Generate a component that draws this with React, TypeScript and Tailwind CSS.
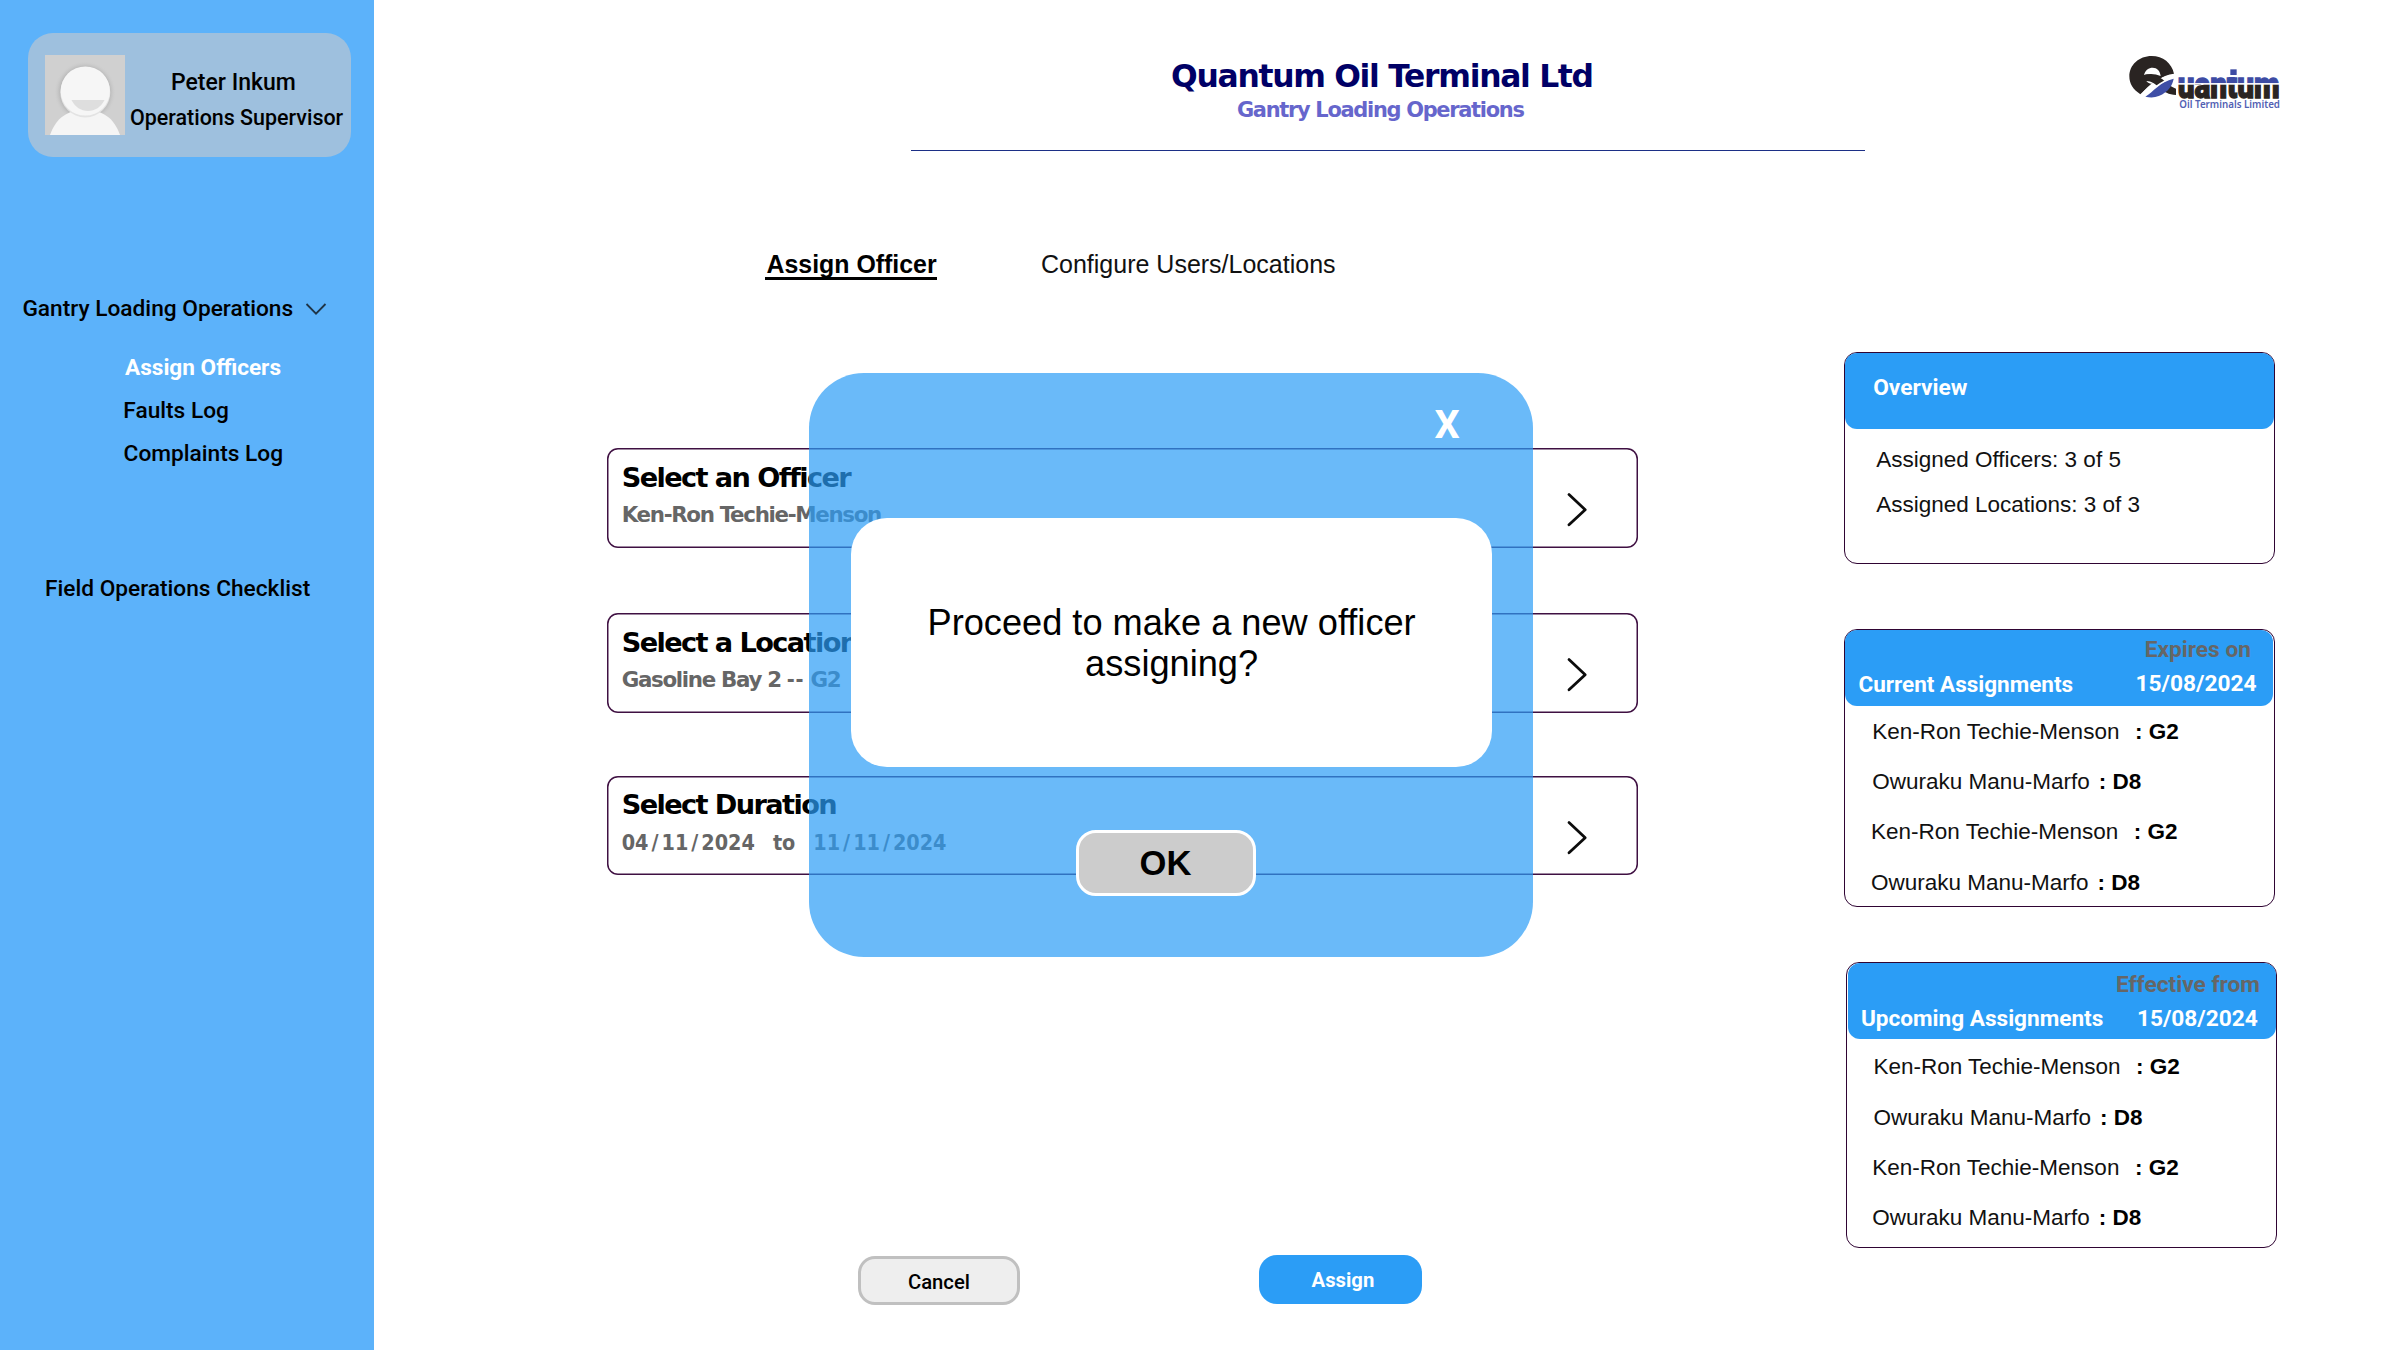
import React from 'react';

const roboto = 'font-[Roboto,sans-serif]';
const arial = "font-['Liberation_Sans',Arial,sans-serif]";
const wide = "font-['DejaVu_Sans',Verdana,sans-serif] [font-variant-ligatures:none]";
const condensed = "font-['DejaVu_Sans_Condensed','DejaVu_Sans',sans-serif]";

function Avatar() {
  return (
    <svg width="80" height="80" viewBox="0 0 80 80" className="shrink-0">
      <defs>
        <radialGradient id="shade" cx="50%" cy="50%" r="50%">
          <stop offset="78%" stopColor="#b4b4b4" />
          <stop offset="100%" stopColor="#cfcfcf" stopOpacity="0" />
        </radialGradient>
      </defs>
      <rect width="80" height="80" fill="#d0d0d0" />
      <circle cx="40" cy="37" r="31" fill="url(#shade)" />
      <path d="M5 80C11 63 22 55 40 55S69 63 75 80Z" fill="#f5f5f5" />
      <circle cx="40.3" cy="37.4" r="25" fill="#e3e3e3" />
      <circle cx="40.3" cy="36" r="24.6" fill="#f6f6f6" />
      <path d="M26.5 45H59.5C56 52 50 56 43 56S30 52 26.5 45Z" fill="#dedede" />
    </svg>
  );
}

function Logo() {
  return (
    <svg width="152" height="55" viewBox="88 75 456 165" className="shrink-0 overflow-visible">
      <defs>
        <linearGradient id="letters" gradientUnits="userSpaceOnUse" x1="0" y1="118" x2="0" y2="208">
          <stop offset="0.44" stopColor="#3d4ba3" />
          <stop offset="0.46" stopColor="#f4f4f8" />
          <stop offset="0.5" stopColor="#f4f4f8" />
          <stop offset="0.52" stopColor="#2a2422" />
        </linearGradient>
      </defs>
      <path d="M122 193C100 178 89 162 89 139C89 105 118 78 156 78C190 78 216 99 223 131C204 133 191 139 180 148C160 161 140 176 122 193Z" fill="#2a2422" />
      <path d="M133 135C137 120 147 113 159 113C172 113 181 122 183 138C168 132 151 130 133 135Z" fill="#fff" />
      <path d="M139 151C150 149 158 154 163 160C154 163 143 160 139 151Z" fill="#fff" />
      <path d="M122 196C150 160 178 140 226 133C222 142 220 146 219 150C192 151 164 172 137 201Z" fill="#fff" />
      <path d="M133 135C156 130 177 138 192 151C204 162 213 171 229 176V195C207 194 193 186 180 174C166 160 153 151 135 153Z" fill="#2a2422" />
      <path d="M130 199C152 182 178 152 223 140L221 147C190 155 165 180 138 202Z" fill="#fff" />
      <path d="M137 200C160 186 181 155 222 146C218 168 207 179 197 187C180 202 158 205 137 200Z" fill="#3f4ea6" />
      <text x="234" y="203" textLength="306" lengthAdjust="spacingAndGlyphs" fontFamily="Roboto" fontWeight="900" fontSize="112" fill="url(#letters)" stroke="url(#letters)" strokeWidth="4">uantum</text>
      <rect x="384" y="108" width="36" height="33" fill="#fff" />
      <rect x="392" y="118" width="19" height="17" fill="#3d4ba3" />
      <text x="239" y="234" textLength="302" lengthAdjust="spacingAndGlyphs" fontFamily="Noto Sans" fontWeight="600" fontSize="30" fill="#5261b3">Oil Terminals Limited</text>
    </svg>
  );
}

function SelectBox({ title, className, children }: { title: string; className: string; children: React.ReactNode }) {
  return (
    <div className={`ml-[233px] flex h-[99.5px] w-[1031px] rounded-[11px] shadow-[inset_0_0_0_1.5px_#3f1042] ${className}`}>
      <div className={`flex-1 pt-[12.6px] pl-[15px] ${wide} font-bold`}>
        <div className="text-[27.2px] leading-[34px] tracking-[-1.6px] text-black">{title}</div>
        <div className="mt-[6.4px] text-[21.4px] leading-[28px] tracking-[-1.33px] whitespace-pre text-[#666]">{children}</div>
      </div>
      <svg width="22" height="37" viewBox="0 0 22 37" className="mt-[43px] mr-[50px]" fill="none" stroke="#0c0c0c" strokeWidth="2.8" strokeLinecap="round" strokeLinejoin="round">
        <path d="M3 3.6L19.2 18.7L3 33.8" />
      </svg>
    </div>
  );
}

function DateText({ parts }: { parts: string[] }) {
  return (
    <span>
      {parts[0]}<span className="px-[3px]">/</span>{parts[1]}<span className="px-[3px]">/</span>{parts[2]}
    </span>
  );
}

function Assignments() {
  const rows = [
    { name: 'Ken-Ron Techie-Menson', code: ': G2', cls: 'pl-[27.5px] gap-[15.5px]' },
    { name: 'Owuraku Manu-Marfo', code: ': D8', cls: 'pl-[27.5px] gap-[9px]' },
    { name: 'Ken-Ron Techie-Menson', code: ': G2', cls: 'pl-[26.3px] gap-[15.5px]' },
    { name: 'Owuraku Manu-Marfo', code: ': D8', cls: 'pl-[26.3px] gap-[9px]' },
  ];
  return (
    <div className={`flex flex-col gap-[22.4px] text-[22.5px] leading-[28px] text-[#111] ${arial}`}>
      {rows.map((r, i) => (
        <div key={i} className={`flex h-[28px] items-baseline whitespace-nowrap ${r.cls}`}>
          <span>{r.name}</span>
          <b className="text-black">{r.code}</b>
        </div>
      ))}
    </div>
  );
}

export default function App() {
  return (
    <div className="relative flex h-[1350px] w-[2400px] overflow-hidden bg-white text-black">
      <aside className={`w-[373.7px] shrink-0 bg-[#5cb2fa] ${roboto} text-[22.7px] leading-[28px] font-medium whitespace-nowrap`}>
        <div className="mt-[33px] ml-[28px] flex h-[124.3px] w-[323px] rounded-[25px] bg-[#9ec0de] pt-[22px] pl-[17px]">
          <Avatar />
          <div className="pt-[14px]">
            <div className="pl-[46px] text-[23px]">Peter Inkum</div>
            <div className="mt-[9px] pl-[5px] text-[21.45px] leading-[24px]">Operations Supervisor</div>
          </div>
        </div>
        <nav className="mt-[137.7px]">
          <div className="flex items-center pl-[22.4px]">
            <span>Gantry Loading Operations</span>
            <svg width="22" height="14" viewBox="0 0 22 14" className="ml-[12px]" fill="none" stroke="#1f3446" strokeWidth="1.8">
              <path d="M1.5 2L11 11.6L20.5 2" />
            </svg>
          </div>
          <div className="mt-[31px] ml-[125px] text-[22.6px] font-bold text-white">Assign Officers</div>
          <div className="mt-[15px] ml-[123.3px]">Faults Log</div>
          <div className="mt-[15px] ml-[123.6px]">Complaints Log</div>
          <div className="mt-[107px] ml-[45px]">Field Operations Checklist</div>
        </nav>
      </aside>

      <main className="flex-1">
        <header className="flex h-[152px]">
          <div className={`ml-[536.9px] h-[151px] w-[954px] border-b-[1.5px] border-[#1c2f86] pt-[56px] font-bold whitespace-nowrap ${wide}`}>
            <h1 className="pl-[260.5px] text-[31.4px] leading-[40px] tracking-[-1.3px] text-[#000066]">Quantum Oil Terminal Ltd</h1>
            <h2 className="mt-px pl-[326.4px] text-[20.95px] leading-[26px] tracking-[-1.3px] text-[#6666cc]">Gantry Loading Operations</h2>
          </div>
          <div className="mt-[55px] ml-[264.5px]">
            <Logo />
          </div>
        </header>

        <div className="flex">
          <section className="w-[1470px] shrink-0">
            <div className={`mt-[97.4px] ml-[391.3px] flex gap-[103.5px] text-[25px] leading-[30px] ${arial}`}>
              <div className="h-[31px] w-[172.5px] border-b-[3px] border-black pl-[1.5px] text-[24.9px] font-bold whitespace-nowrap">Assign Officer</div>
              <div className="text-[#111]">Configure Users/Locations</div>
            </div>
            <SelectBox title="Select an Officer" className="mt-[168px]">Ken-Ron Techie-Menson</SelectBox>
            <SelectBox title="Select a Location" className="mt-[65.4px]">
              Gasoline Bay 2 <span className={`tracking-[0.8px] ${condensed}`}>--</span> G2
            </SelectBox>
            <SelectBox title="Select Duration" className="mt-[63.1px]">
              <span className={`tracking-normal ${condensed}`}>
                <DateText parts={['04', '11', '2024']} />
                <span className="mx-[18px]">to</span>
                <DateText parts={['11', '11', '2024']} />
              </span>
            </SelectBox>
            <div className={`mt-[380.6px] ml-[484px] flex text-[20.25px] leading-[26px] ${roboto}`}>
              <button className="h-[49px] w-[162.5px] rounded-[17px] border-[3.5px] border-[#c0c0c0] bg-[#eee] pt-[3px] font-medium">Cancel</button>
              <button className="-mt-px ml-[239px] h-[49px] w-[162.5px] rounded-[18px] bg-[#2b9df6] pt-px pl-[5px] font-bold text-white">Assign</button>
            </div>
          </section>

          <aside className="pt-[200px]">
            <div className="h-[212.4px] w-[431px] rounded-[13px] border border-[#2f0433]">
              <div className={`h-[75.7px] rounded-[12px] bg-[#2b9df6] pt-[21px] pl-[28.5px] text-[22.7px] leading-[28px] font-bold text-white ${roboto}`}>Overview</div>
              <div className={`flex flex-col gap-[17px] pt-[17px] pl-[31.5px] text-[22.5px] leading-[28px] text-[#111] ${arial}`}>
                <div>Assigned Officers: 3 of 5</div>
                <div>Assigned Locations: 3 of 3</div>
              </div>
            </div>

            <div className="mt-[64.6px] h-[278px] w-[431px] rounded-[13px] border border-[#2f0433]">
              <div className={`h-[75.7px] w-[428.5px] rounded-[12px] bg-[#2b9df6] pt-[6.4px] text-[22.7px] leading-[28px] font-bold whitespace-nowrap text-white ${roboto}`}>
                <div className="pl-[300px] text-[#666]">Expires on</div>
                <div className="mt-[6px] flex pl-[13.8px]">
                  <span className="w-[277px] text-[22.5px]">Current Assignments</span>
                  <span>15/08/2024</span>
                </div>
              </div>
              <div className="mt-[12px]"><Assignments /></div>
            </div>

            <div className="mt-[55px] ml-[2.7px] h-[285.7px] w-[431px] rounded-[13px] border border-[#2f0433]">
              <div className={`ml-[0.5px] h-[75.7px] w-[428.5px] rounded-[12px] bg-[#2b9df6] pt-[8px] text-[22.7px] leading-[28px] font-bold whitespace-nowrap text-white ${roboto}`}>
                <div className="pl-[268px] text-[#666]">Effective from</div>
                <div className="mt-[6px] flex pl-[13px]">
                  <span className="w-[276px] text-[22.6px]">Upcoming Assignments</span>
                  <span>15/08/2024</span>
                </div>
              </div>
              <div className="mt-[14.5px] -ml-[1.5px]"><Assignments /></div>
            </div>
          </aside>
        </div>
      </main>

      <div className="absolute top-[373.3px] left-[809.3px] h-[583.3px] w-[723.5px] rounded-[55px] bg-[#2b9df6]/70">
        <button className={`mt-[31px] ml-[625.3px] block text-[39.7px] leading-[42px] font-bold text-white ${roboto}`}>X</button>
        <div className={`mt-[72px] ml-[41.3px] h-[249px] w-[641px] rounded-[36px] bg-white pt-[84px] pl-px text-center text-[36.2px] leading-[41px] ${arial}`}>
          Proceed to make a new officer<br />assigning?
        </div>
        <button className={`mt-[62.7px] ml-[266.7px] block h-[66px] w-[180px] rounded-[20px] border-[3px] border-white bg-[#ccc] pr-px text-[34.6px] leading-[40px] font-bold ${arial}`}>OK</button>
      </div>
    </div>
  );
}
